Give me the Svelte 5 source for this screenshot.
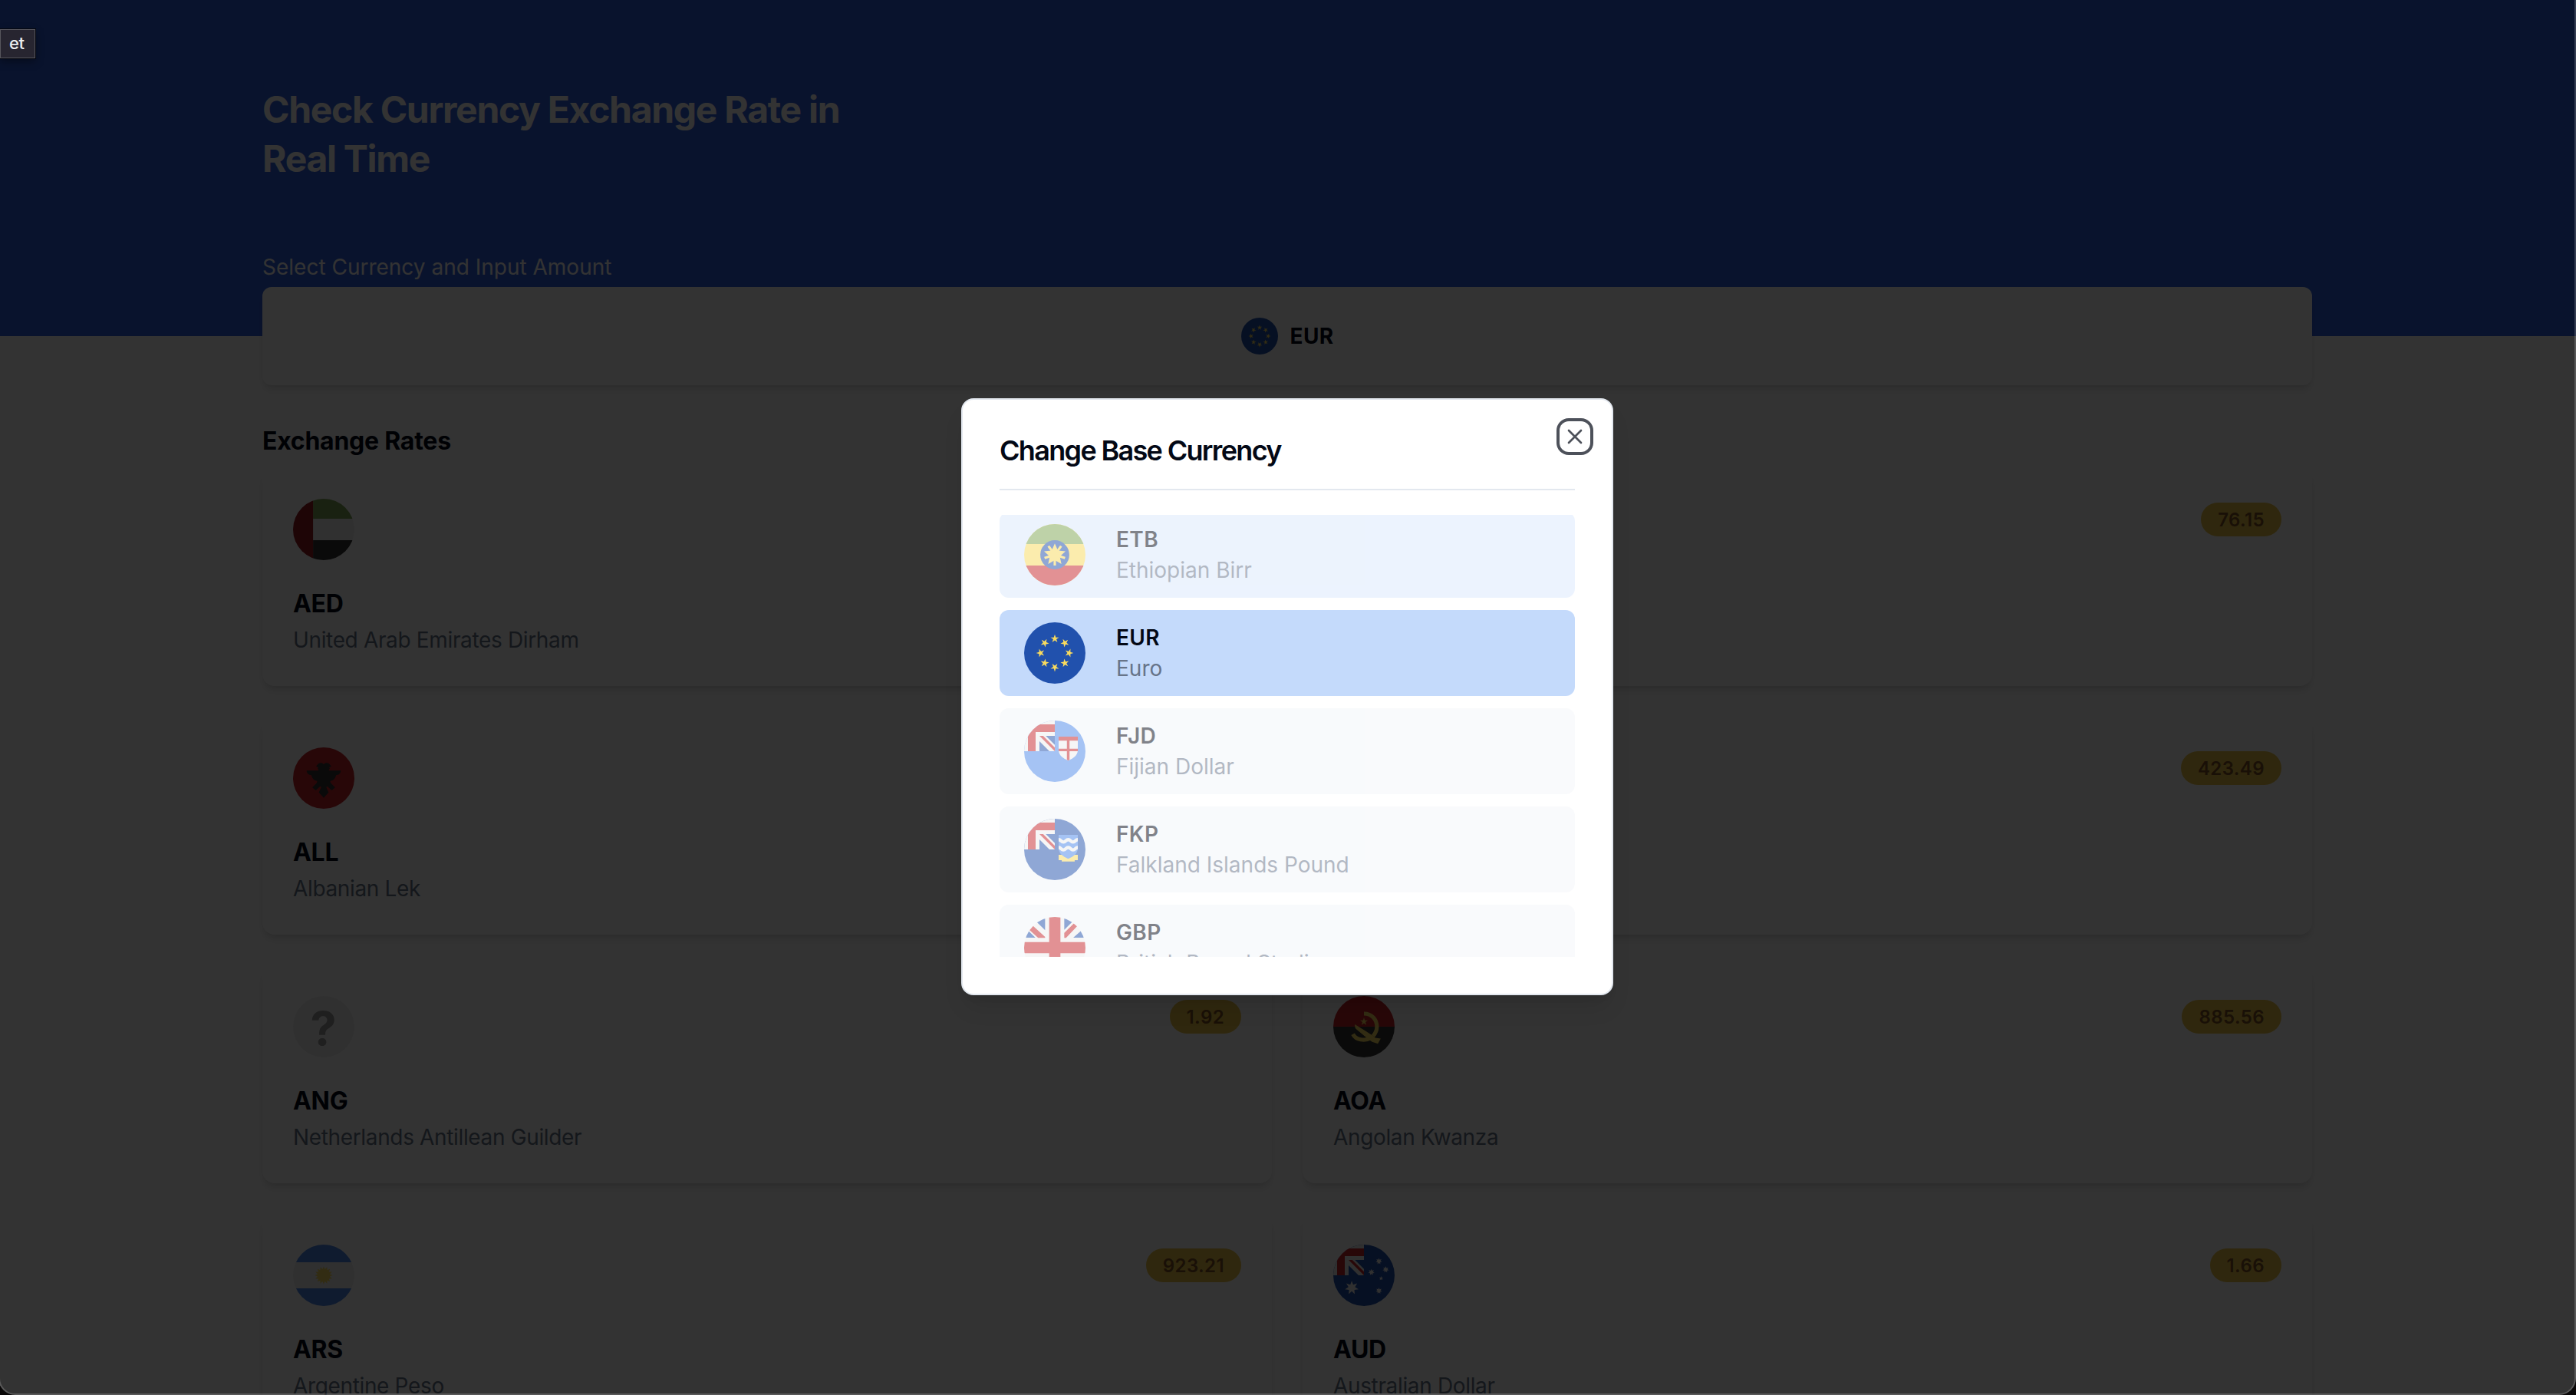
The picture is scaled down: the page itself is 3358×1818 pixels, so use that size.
<script>
  const rates = [
    { code: 'AED', name: 'United Arab Emirates Dirham', rate: '3.97' },
    { code: 'AFN', name: 'Afghani', rate: '76.15' },
    { code: 'ALL', name: 'Albanian Lek', rate: '100.32' },
    { code: 'AMD', name: 'Dram', rate: '423.49' },
    { code: 'ANG', name: 'Netherlands Antillean Guilder', rate: '1.92' },
    { code: 'AOA', name: 'Angolan Kwanza', rate: '885.56' },
    { code: 'ARS', name: 'Argentine Peso', rate: '923.21' },
    { code: 'AUD', name: 'Australian Dollar', rate: '1.66' }
  ];

  const currencies = [
    { code: 'ETB', name: 'Ethiopian Birr', state: 'hovered' },
    { code: 'EUR', name: 'Euro', state: 'selected' },
    { code: 'FJD', name: 'Fijian Dollar', state: '' },
    { code: 'FKP', name: 'Falkland Islands Pound', state: '' },
    { code: 'GBP', name: 'British Pound Sterling', state: '' }
  ];

  // Points of a star with n tips, first tip upwards
  function star(cx, cy, outer, inner, n) {
    const pts = [];
    for (let i = 0; i < n * 2; i++) {
      const r = i % 2 ? inner : outer;
      const a = (Math.PI * i) / n - Math.PI / 2;
      pts.push(`${(cx + r * Math.cos(a)).toFixed(1)},${(cy + r * Math.sin(a)).toFixed(1)}`);
    }
    return pts.join(' ');
  }

  const C = {
    red: '#c6262c', darkRed: '#941920', blue: '#2151ad', sky: '#4d88eb',
    yellow: '#f9db5e', green: '#7fa654', white: '#eeeeee', black: '#333333'
  };
  const eighths = [0, 45, 90, 135, 180, 225, 270, 315];
  const fifths = [0, 72, 144, 216, 288];
</script>

{#snippet canton()}
  <path fill={C.white} d="M0 0h256v256H0z" />
  <path fill={C.red} d="M32 0v32H0v64h32v160h64V96h160V32H96V0z" />
  <path fill={C.white} d="M96 96h160v160H96z" />
  <path fill={C.blue} d="M128 173v83h83zM181 128h75v75z" />
  <path fill={C.red} d="M128 128 256 256v-31l-97-97z" />
{/snippet}

{#snippet flag(code)}
  <svg class="flag" viewBox="0 0 512 512" aria-hidden="true">
    {#if code === 'EUR'}
      <path fill={C.blue} d="M0 0h512v512H0z" />
      {#each eighths as r}
        <polygon fill={C.yellow} points={star(256, 137, 37, 14, 5)} transform="rotate({r} 256 256)" />
      {/each}
    {:else if code === 'ETB'}
      <path fill={C.yellow} d="M0 0h512v512H0z" />
      <path fill={C.green} d="M0 0h512v167H0z" />
      <path fill={C.red} d="M0 345h512v167H0z" />
      <circle fill={C.blue} cx="256" cy="256" r="121" />
      <polygon fill={C.yellow} points={star(256, 256, 94, 44, 5)} />
      {#each fifths as r}
        <path fill={C.yellow} d="M246 256h20v90h-20z" transform="rotate({r} 256 256)" />
      {/each}
    {:else if code === 'FJD'}
      <path fill={C.sky} d="M0 0h512v512H0z" />
      {@render canton()}
      <path fill={C.white} d="M288 134h160v112c0 61-80 87-80 87s-80-26-80-87z" />
      <path fill={C.red} d="M288 134h160v34H288zM357 160h22v168l-11 5-11-5zM288 235h160v21H288z" />
    {:else if code === 'FKP'}
      <path fill={C.blue} d="M0 0h512v512H0z" />
      {@render canton()}
      <path fill={C.yellow} d="M288 301h160v45h-26v10H314v-10h-26z" />
      <path fill={C.sky} d="M288 134h160v112c0 61-80 87-80 87s-80-26-80-87z" />
      <g fill="none" stroke={C.white} stroke-width="28">
        <path d="M288 174c20 0 20 20 40 20s20-20 40-20 20 20 40 20 20-20 40-20" />
        <path d="M288 240c20 0 20 20 40 20s20-20 40-20 20 20 40 20 20-20 40-20" />
      </g>
    {:else if code === 'GBP'}
      <path fill={C.white} d="M0 0h512v512H0z" />
      <g fill={C.blue}>
        <path d="M175 0v111L100 36V0zM335 0v107l82-82V0zM0 81l94 92H0zM512 83l-102 90h102z" />
        <path d="M175 512V401l-75 75v36zM335 512V405l82 82v25zM0 431l94-92H0zM512 429l-102-90h102z" />
      </g>
      <g fill={C.red}>
        <path d="M209 0h94v512h-94zM0 209h512v94H0z" />
        <path d="M43 107l32-32 100 92v8h-58zM335 175v-43l81-79 28 22-94 100z" />
        <path d="M43 405l32 32 100-92v-8h-58zM335 337v43l81 79 28-22-94-100z" />
      </g>
    {:else if code === 'AED'}
      <path fill={C.white} d="M0 0h512v512H0z" />
      <path fill={C.green} d="M167 0h345v167H167z" />
      <path fill={C.black} d="M167 345h345v167H167z" />
      <path fill={C.darkRed} d="M0 0h167v512H0z" />
    {:else if code === 'ALL'}
      <path fill={C.red} d="M0 0h512v512H0z" />
      {#each [1, -1] as side}
        <path
          fill={C.black}
          transform="translate({side === 1 ? 0 : 512} 0) scale({side} 1)"
          d="M257 142c-8-10-18-12-30-12-14 0-26 14-34 30l18 6-6 12c8 6 10 12 4 16h-96c2 22 18 38 40 38 6 26 22 46 48 48 0 10-2 14-4 18l-36 36 28 24 36-32c6-2 10 4 8 12l-18 38 42 45z"
        />
      {/each}
    {:else if code === 'ANG'}
      <path fill="#f0f0f0" d="M0 0h512v512H0z" />
      <text class="unknown" x="253" y="412" text-anchor="middle">?</text>
    {:else if code === 'AOA'}
      <path fill={C.red} d="M0 0h512v256H0z" />
      <path fill={C.black} d="M0 256h512v256H0z" />
      <polygon fill={C.yellow} points={star(256, 214, 34, 13, 5)} />
      <g fill="none" stroke={C.yellow}>
        <path stroke-width="33" d="M256 147c66 0 108 50 108 109 0 32-12 56-32 78" />
        <path stroke-width="33" d="M164 318c26 50 96 60 150 32" />
      </g>
      <path fill={C.yellow} d="M180 236l148 93 22 20 46 6-24 44-48-16-24-16-112-94c-6-8-10-22-8-37z" />
    {:else if code === 'ARS'}
      <path fill={C.white} d="M0 0h512v512H0z" />
      <path fill={C.sky} d="M0 0h512v147H0zM0 365h512v147H0z" />
      <polygon fill={C.yellow} points={star(256, 256, 74, 52, 16)} />
    {:else if code === 'AUD'}
      <path fill={C.blue} d="M0 0h512v512H0z" />
      {@render canton()}
      <g fill={C.white}>
        <polygon points={star(154, 360, 58, 28, 7)} />
        <polygon points={star(381, 139, 27, 14, 7)} />
        <polygon points={star(438, 208, 27, 14, 7)} />
        <polygon points={star(318, 230, 27, 14, 7)} />
        <polygon points={star(381, 385, 27, 14, 7)} />
        <polygon points={star(399, 281, 19, 8, 5)} />
      </g>
    {:else}
      <path fill={C.white} d="M0 0h512v512H0z" />
    {/if}
  </svg>
{/snippet}

<div class="screen">
  <main class="page">
    <header class="hero">
      <div class="container">
        <h1>Check Currency Exchange Rate in<br />Real Time</h1>
        <p class="label">Select Currency and Input Amount</p>
      </div>
    </header>

    <div class="container">
      <button class="base">
        {@render flag('EUR')}
        <span>EUR</span>
      </button>

      <h2>Exchange Rates</h2>
      <section class="grid">
        {#each rates as r}
          <article class="card">
            <div class="card-top">
              {@render flag(r.code)}
              <span class="badge">{r.rate}</span>
            </div>
            <h3>{r.code}</h3>
            <p>{r.name}</p>
          </article>
        {/each}
      </section>
    </div>
  </main>

  <div class="scrim">
    <div class="dialog" role="dialog" aria-label="Change Base Currency">
      <h2 class="dialog-title">Change Base Currency</h2>
      <div class="list">
        {#each currencies as c}
          <div class="item {c.state}">
            {@render flag(c.code)}
            <div class="item-text">
              <strong>{c.code}</strong>
              <span>{c.name}</span>
            </div>
          </div>
        {/each}
      </div>
      <button class="close" aria-label="Close">
        <svg viewBox="0 0 24 24" fill="none" stroke="currentColor" stroke-width="2" stroke-linecap="round" stroke-linejoin="round">
          <path d="M18 6 6 18M6 6l12 12" />
        </svg>
      </button>
    </div>
  </div>

  <div class="tooltip">et</div>
  <div class="window-edge"></div>
</div>

<style>
  :global(body) {
    background: #333;
  }
  h1, h2, h3, p {
    margin: 0;
  }
  button {
    font: inherit;
    border: 0;
    padding: 0;
  }
  .screen {
    position: relative;
    width: 3358px;
    height: 1818px;
    overflow: hidden;
    font-family: Inter, 'Liberation Sans', sans-serif;
    color: #030815;
    background: #fff;
  }
  .page {
    width: 3356px;
  }
  .container {
    width: 2672px;
    margin: 0 auto;
  }
  .hero {
    box-sizing: border-box;
    width: 3358px;
    height: 438px;
    padding: 111px 2px 0 0;
    background: #3060e1;
    color: #fff;
  }
  h1 {
    font-size: 48px;
    line-height: 64px;
    font-weight: 700;
    letter-spacing: -1.3px;
  }
  .label {
    margin-top: 89px;
    font-size: 28px;
    line-height: 40px;
  }
  .flag {
    display: block;
    flex: none;
    width: 80px;
    height: 80px;
    border-radius: 50%;
  }
  .base {
    position: relative;
    display: flex;
    align-items: center;
    justify-content: center;
    gap: 16px;
    width: 100%;
    height: 128px;
    margin-top: -64px;
    border-radius: 12px;
    background: #fff;
    color: inherit;
    font-size: 28px;
    font-weight: 700;
    letter-spacing: 0.3px;
    box-shadow: 0 8px 12px -2px rgba(0, 0, 0, 0.1), 0 4px 8px -4px rgba(0, 0, 0, 0.1);
  }
  .base .flag {
    width: 48px;
    height: 48px;
  }
  h2 {
    margin-top: 45px;
    font-size: 32px;
    line-height: 56px;
    font-weight: 700;
    letter-spacing: -0.25px;
  }
  .grid {
    display: grid;
    grid-template-columns: 1fr 1fr;
    gap: 40px;
    margin-top: 7px;
  }
  .card {
    box-sizing: border-box;
    height: 284px;
    padding: 40px;
    border-radius: 16px;
    background: #fff;
    box-shadow: 0 8px 12px -2px rgba(0, 0, 0, 0.1), 0 4px 8px -4px rgba(0, 0, 0, 0.1);
  }
  .card-top {
    display: flex;
    justify-content: space-between;
    align-items: flex-start;
  }
  .badge {
    margin-top: 5px;
    padding: 7px 22px 5px;
    border-radius: 22px;
    background: #ebc446;
    color: #7d5023;
    font-size: 24px;
    line-height: 32px;
    font-weight: 600;
    letter-spacing: 0.4px;
  }
  .card h3 {
    margin-top: 29px;
    font-size: 32px;
    line-height: 56px;
    font-weight: 700;
    letter-spacing: -0.3px;
  }
  .card p {
    margin-top: -1px;
    font-size: 28px;
    line-height: 40px;
    letter-spacing: -0.35px;
    color: #677489;
  }
  .unknown {
    font-size: 390px;
    font-weight: 700;
    fill: #9c9c9c;
  }
  .scrim {
    position: absolute;
    inset: 0 2px 2px 0;
    display: flex;
    align-items: center;
    justify-content: center;
    background: rgba(0, 0, 0, 0.8);
    box-shadow: 0 0 0 2px rgba(0, 0, 0, 0.8);
  }
  .dialog {
    position: relative;
    box-sizing: border-box;
    width: 850px;
    height: 778px;
    padding: 48px;
    border: 2px solid #e3e8ef;
    border-radius: 16px;
    background: #fff;
    box-shadow: 0 20px 30px -6px rgba(0, 0, 0, 0.1), 0 8px 12px -8px rgba(0, 0, 0, 0.1);
  }
  .dialog-title {
    margin: 0;
    padding-bottom: 32px;
    border-bottom: 2px solid #e3e8ef;
    font-size: 36px;
    line-height: 36px;
    font-weight: 600;
    letter-spacing: -1.67px;
  }
  .list {
    display: flex;
    flex-direction: column;
    justify-content: flex-start;
    gap: 16px;
    height: 576px;
    margin-top: 32px;
    overflow: hidden;
  }
  .item {
    box-sizing: border-box;
    flex: none;
    display: flex;
    align-items: center;
    gap: 40px;
    height: 112px;
    padding: 16px 32px;
    border-radius: 12px;
    background: #f3f6fa;
    opacity: 0.5;
  }
  .item:first-child {
    margin-top: -4px;
  }
  .item.hovered {
    background: #dae8fd;
  }
  .item.selected {
    background: #c4dafb;
    opacity: 1;
  }
  .item-text {
    display: flex;
    flex-direction: column;
    font-size: 28px;
    line-height: 40px;
  }
  .item-text strong {
    font-weight: 600;
    letter-spacing: 0.4px;
  }
  .item-text span {
    color: #677489;
  }
  .close {
    position: absolute;
    top: 32px;
    right: 32px;
    width: 32px;
    height: 32px;
    border-radius: 8px;
    background: #fff;
    color: #030815;
    opacity: 0.7;
    box-shadow: 0 0 0 4px #fff, 0 0 0 8px #030815;
  }
  .close svg {
    display: block;
    width: 32px;
    height: 32px;
  }
  .tooltip {
    position: absolute;
    top: 38px;
    left: 0;
    box-sizing: border-box;
    width: 46px;
    height: 38px;
    padding-left: 11px;
    border: 1px solid #56555c;
    background: #272530;
    color: #eceeee;
    font-size: 22px;
    line-height: 34px;
    font-weight: 500;
    letter-spacing: -0.4px;
    box-shadow: 0 0 0 1px #05070f, 0 4px 12px rgba(0, 0, 0, 0.4);
  }
  .window-edge {
    position: absolute;
    inset: -30px 0 0 -2px;
    border: 2px solid rgba(255, 255, 255, 0.19);
    border-radius: 0 0 22px 22px;
    box-shadow: 0 0 0 30px #0a0808;
    pointer-events: none;
  }
</style>
